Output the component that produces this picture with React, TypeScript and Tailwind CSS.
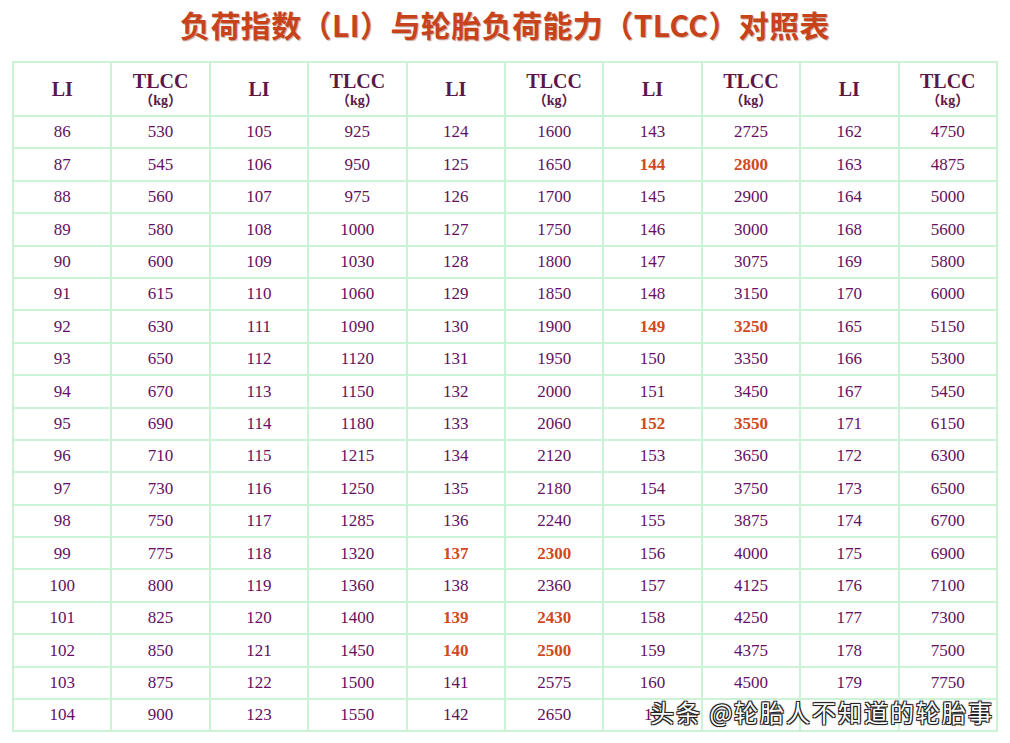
import React from 'react';

type Cell = { li: string; kg: string; hot?: boolean };

const groups: Cell[][] = [
    [
        ['86', '530'], ['87', '545'], ['88', '560'], ['89', '580'], ['90', '600'], ['91', '615'], ['92', '630'],
        ['93', '650'], ['94', '670'], ['95', '690'], ['96', '710'], ['97', '730'], ['98', '750'], ['99', '775'],
        ['100', '800'], ['101', '825'], ['102', '850'], ['103', '875'], ['104', '900'],
    ].map(([li, kg]) => ({ li, kg })),
    [
        ['105', '925'], ['106', '950'], ['107', '975'], ['108', '1000'], ['109', '1030'], ['110', '1060'], ['111', '1090'],
        ['112', '1120'], ['113', '1150'], ['114', '1180'], ['115', '1215'], ['116', '1250'], ['117', '1285'], ['118', '1320'],
        ['119', '1360'], ['120', '1400'], ['121', '1450'], ['122', '1500'], ['123', '1550'],
    ].map(([li, kg]) => ({ li, kg })),
    [
        ['124', '1600'], ['125', '1650'], ['126', '1700'], ['127', '1750'], ['128', '1800'], ['129', '1850'], ['130', '1900'],
        ['131', '1950'], ['132', '2000'], ['133', '2060'], ['134', '2120'], ['135', '2180'], ['136', '2240'], ['137', '2300'],
        ['138', '2360'], ['139', '2430'], ['140', '2500'], ['141', '2575'], ['142', '2650'],
    ].map(([li, kg]) => ({ li, kg, hot: ['137', '139', '140'].includes(li) })),
    [
        ['143', '2725'], ['144', '2800'], ['145', '2900'], ['146', '3000'], ['147', '3075'], ['148', '3150'], ['149', '3250'],
        ['150', '3350'], ['151', '3450'], ['152', '3550'], ['153', '3650'], ['154', '3750'], ['155', '3875'], ['156', '4000'],
        ['157', '4125'], ['158', '4250'], ['159', '4375'], ['160', '4500'], ['16', ''],
    ].map(([li, kg]) => ({ li, kg, hot: ['144', '149', '152'].includes(li) })),
    [
        ['162', '4750'], ['163', '4875'], ['164', '5000'], ['168', '5600'], ['169', '5800'], ['170', '6000'], ['165', '5150'],
        ['166', '5300'], ['167', '5450'], ['171', '6150'], ['172', '6300'], ['173', '6500'], ['174', '6700'], ['175', '6900'],
        ['176', '7100'], ['177', '7300'], ['178', '7500'], ['179', '7750'], ['', ''],
    ].map(([li, kg]) => ({ li, kg })),
];

const cellBase = "border-2 border-[#cdf3d6] text-center p-0 font-['Liberation_Serif',serif]";

export default function App() {
    return (
        <div className="relative w-[1010px] h-[743px] bg-white overflow-hidden font-['Liberation_Serif',serif]">
            <div className="h-[48px] flex items-center justify-center">
                <h1 className="text-[30px] font-bold text-[#c8421a] tracking-[0.4px] font-['Noto_Sans_CJK_SC',sans-serif] [text-shadow:1px_1px_1px_rgba(120,60,40,0.45)]">
                    负荷指数（LI）与轮胎负荷能力（TLCC）对照表
                </h1>
            </div>

            <table className="ml-[12px] mt-[13px] w-[986px] table-fixed border-collapse">
                <thead>
                    <tr className="h-[54px]">
                        {groups.map((_, i) => (
                            <React.Fragment key={i}>
                                <th className={`${cellBase} text-[20px] font-bold text-[#5a1848]`}>LI</th>
                                <th className={`${cellBase} font-bold text-[#5a1848]`}>
                                    <div className="text-[20px] leading-[22px] font-['Liberation_Serif',serif]">TLCC</div>
                                    <div className="text-[14px] leading-[17px] font-['Liberation_Serif','Noto_Sans_CJK_SC',serif]">（kg）</div>
                                </th>
                            </React.Fragment>
                        ))}
                    </tr>
                </thead>
                <tbody>
                    {groups[0].map((_, r) => (
                        <tr key={r} className="h-[32.4px]">
                            {groups.map((g, i) => {
                                const c = g[r];
                                const tone = c.hot ? 'font-bold text-[#cf4a1e]' : 'text-[#650f62]';
                                return (
                                    <React.Fragment key={i}>
                                        <td className={`${cellBase} text-[17px] ${tone}`}>{c.li}</td>
                                        <td className={`${cellBase} text-[17px] ${tone}`}>{c.kg}</td>
                                    </React.Fragment>
                                );
                            })}
                        </tr>
                    ))}
                </tbody>
            </table>

            {/* watermark */}
            <div className="absolute left-[650px] top-[696px] text-[24px] leading-[32px] text-white tracking-[2px] font-['Noto_Sans_CJK_SC',sans-serif] [text-shadow:-1px_-1px_0_#222,1px_-1px_0_#222,-1px_1px_0_#222,1px_1px_0_#222,0_0_3px_rgba(0,0,0,0.7)]">
                头条 @轮胎人不知道的轮胎事
            </div>
        </div>
    );
}
